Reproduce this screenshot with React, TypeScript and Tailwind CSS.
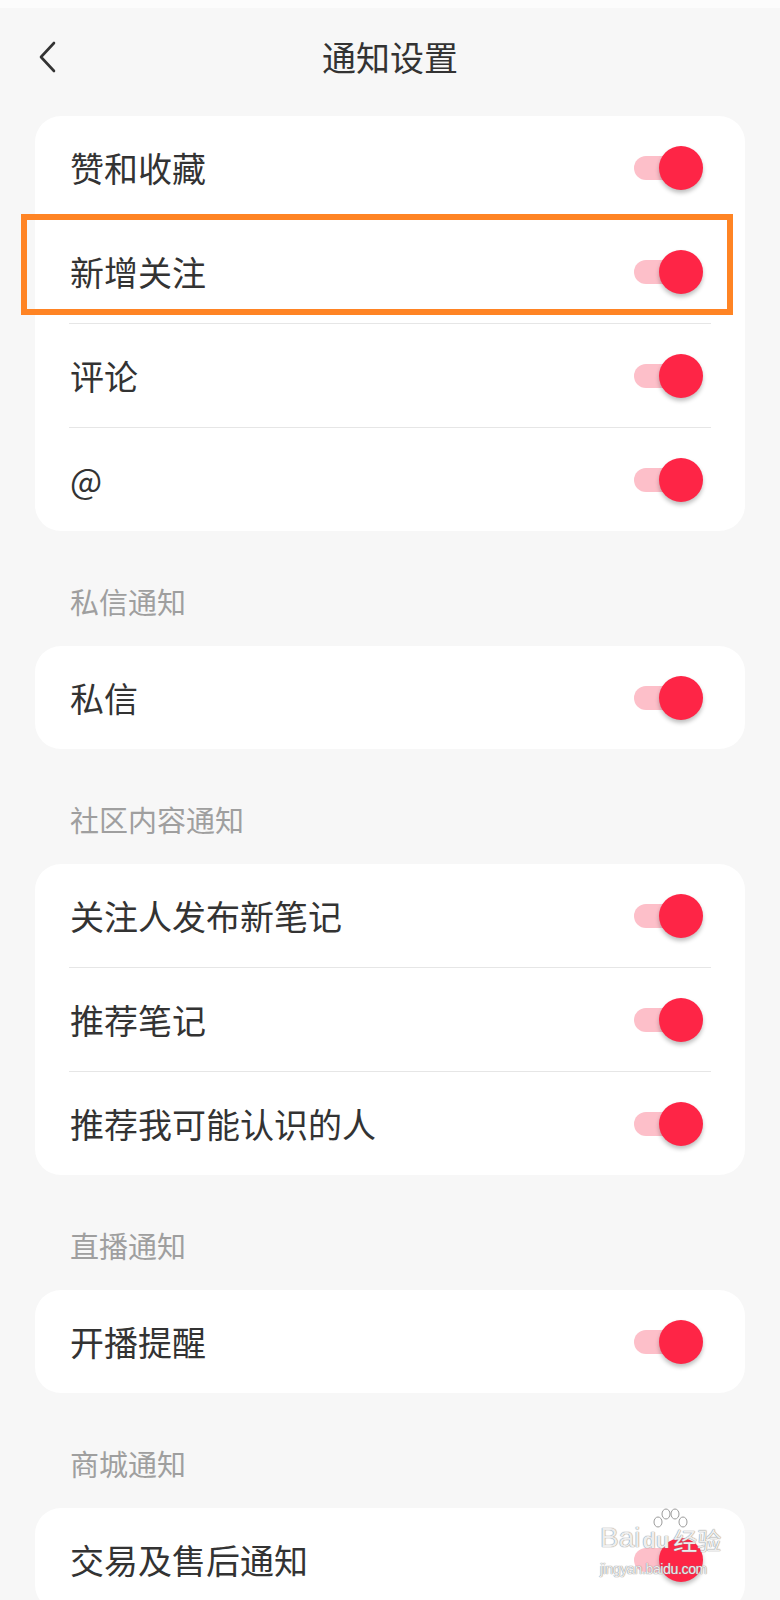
const font = { fontFamily: '"Noto Sans CJK SC", "Noto Sans", sans-serif' };

type Item = { label: string; highlight?: boolean };

const sections: { title?: string; items: Item[] }[] = [
  {
    items: [
      { label: "赞和收藏" },
      { label: "新增关注", highlight: true },
      { label: "评论" },
      { label: "@" },
    ],
  },
  { title: "私信通知", items: [{ label: "私信" }] },
  {
    title: "社区内容通知",
    items: [
      { label: "关注人发布新笔记" },
      { label: "推荐笔记" },
      { label: "推荐我可能认识的人" },
    ],
  },
  { title: "直播通知", items: [{ label: "开播提醒" }] },
  { title: "商城通知", items: [{ label: "交易及售后通知" }] },
];

const Toggle = () => (
  <div className="relative w-[69px] h-[44px] shrink-0">
    <div className="absolute left-0 top-[10px] w-[58px] h-[24px] rounded-full bg-[#fdbfc9]" />
    <div className="absolute right-0 top-0 w-[44px] h-[44px] rounded-full bg-[#fe2546] shadow-[0_3px_4px_rgba(0,0,0,0.25)]" />
  </div>
);

const Row = ({ item }: { item: Item }) => (
  <div className="relative flex items-center justify-between h-[103px] pl-[35px] pr-[42px]">
    <span className="text-[34px] leading-none text-[#333]">{item.label}</span>
    <Toggle />
    {item.highlight && (
      <div className="absolute -left-[14px] right-[12px] -top-[6px] h-[101px] border-[6px] border-[#ff8424] pointer-events-none" />
    )}
  </div>
);

export default function App() {
  return (
    <div className="relative min-h-[1600px] bg-[#f7f7f7] overflow-hidden" style={font}>
      <div className="h-[8px] bg-[#fcfcfc]" />
      <header className="relative h-[108px] flex items-center justify-center">
        <svg className="absolute left-[36px] top-[33px]" width="22" height="32" viewBox="0 0 22 32" fill="none">
          <path d="M18 2 L5 16 L18 30" stroke="#333" strokeWidth="2.6" strokeLinecap="round" strokeLinejoin="round" />
        </svg>
        <h1 className="text-[34px] leading-none text-[#333] -mt-[10px]">通知设置</h1>
      </header>

      <div className="px-[35px]">
        {sections.map((s, i) => (
          <div key={i}>
            {s.title && (
              <div className="pt-[55px] pb-[30px] pl-[35px] text-[29px] leading-[30px] text-[#9f9f9f]">
                {s.title}
              </div>
            )}
            <div className="bg-white rounded-[26px]">
              {s.items.map((item, j) => (
                <div key={j}>
                  {j > 0 && <div className="mx-[34px] h-px bg-[#e6e6e6]" />}
                  <Row item={item} />
                </div>
              ))}
            </div>
          </div>
        ))}
      </div>

      {/* watermark */}
      <div className="absolute left-[600px] top-[1512px] w-[145px] text-white/85 [text-shadow:0_0_1px_#8a8a8a,0_0_1px_#8a8a8a]" style={{ fontFamily: '"Liberation Sans", "Noto Sans CJK SC", sans-serif' }}>
        <div className="relative flex items-end">
          <svg className="absolute left-[50px] -top-[4px]" width="40" height="22" viewBox="0 0 40 22" fill="none" stroke="#9a9a9a" strokeWidth="1">
            <ellipse cx="8" cy="14" rx="4" ry="5" fill="rgba(255,255,255,0.7)" />
            <ellipse cx="16" cy="6" rx="4" ry="5" fill="rgba(255,255,255,0.7)" />
            <ellipse cx="25" cy="6" rx="4" ry="5" fill="rgba(255,255,255,0.7)" />
            <ellipse cx="33" cy="14" rx="4" ry="5" fill="rgba(255,255,255,0.7)" />
          </svg>
          <span className="text-[28px] leading-none">Bai</span>
          <span className="text-[22px] leading-none font-bold ml-[2px] mt-[18px]">du</span>
          <span className="text-[24px] leading-none ml-[4px]" style={font}>经验</span>
        </div>
        <div className="text-[14px] leading-none mt-[10px] tracking-tight">jingyan.baidu.com</div>
      </div>
    </div>
  );
}
